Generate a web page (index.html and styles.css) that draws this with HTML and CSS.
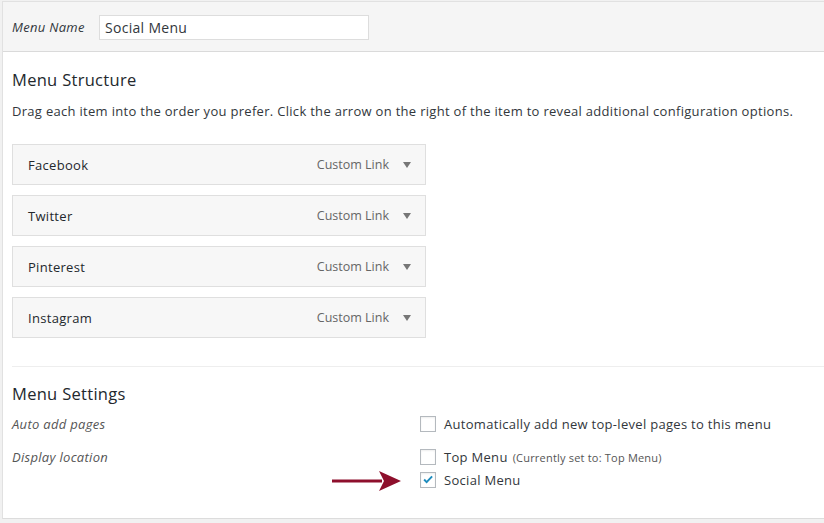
FILE: index.html
```html
<!DOCTYPE html>
<html>
<head>
<meta charset="utf-8">
<link rel="stylesheet" href="styles.css">
</head>
<body>
<div class="frame">
  <div class="header">
    <label class="name-label">Menu Name</label>
    <div class="name-input">Social Menu</div>
  </div>
  <div class="body">
    <h3 class="title">Menu Structure</h3>
    <p class="desc">Drag each item into the order you prefer. Click the arrow on the right of the item to reveal additional configuration options.</p>
    <ul class="items">
      <li class="item"><span class="item-title">Facebook</span><span class="item-type">Custom Link</span><span class="toggle"></span></li>
      <li class="item"><span class="item-title">Twitter</span><span class="item-type">Custom Link</span><span class="toggle"></span></li>
      <li class="item"><span class="item-title">Pinterest</span><span class="item-type">Custom Link</span><span class="toggle"></span></li>
      <li class="item"><span class="item-title">Instagram</span><span class="item-type">Custom Link</span><span class="toggle"></span></li>
    </ul>
    <div class="settings">
      <h3 class="title settings-title">Menu Settings</h3>
      <div class="row">
        <div class="row-label">Auto add pages</div>
        <div class="row-field">
          <div class="opt"><span class="box"></span><span>Automatically add new top-level pages to this menu</span></div>
        </div>
      </div>
      <div class="row row-loc">
        <div class="row-label">Display location</div>
        <div class="row-field">
          <div class="opt"><span class="box"></span><span>Top Menu</span><span class="note">(Currently set to: Top Menu)</span></div>
          <div class="opt opt-social">
            <svg class="pointer" width="70" height="20" viewBox="0 0 70 20"><path d="M0 8.5h50v3H0z" fill="#8e0f2c"/><path d="M47 0L69 10 47 20 52 10z" fill="#8e0f2c"/></svg>
            <span class="box checked"><svg width="16" height="16" viewBox="0 0 16 16"><path d="M2.8 8.3l1.6-1.6 2 2.1L11.9 3l1.6 1.6-7.1 7.4z" fill="#1e8cbe"/></svg></span><span>Social Menu</span>
          </div>
        </div>
      </div>
    </div>
  </div>
</div>
</body>
</html>
```
FILE: styles.css
```css
html, body { margin: 0; padding: 0; }
body {
  background: #f1f1f1;
  font-family: "Open Sans", "Liberation Sans", sans-serif;
  color: #32373c;
  font-size: 13px;
  letter-spacing: 0.3px;
  width: 824px;
  height: 523px;
  overflow: hidden;
}
.frame {
  margin-left: 2px;
  margin-top: 1px;
  background: #fff;
  border-left: 1px solid #e1e1e1;
  border-top: 1px solid #e1e1e1;
  border-bottom: 1px solid #dcdcdc;
  height: 516px;
}
.header {
  background: #f5f5f5;
  border-bottom: 1px solid #dadada;
  height: 49px;
  display: flex;
  align-items: center;
  padding-left: 9px;
}
.name-label {
  font-style: italic;
  color: #32373c;
  font-size: 13px;
  width: 87px;
}
.name-input {
  width: 263px;
  height: 23px;
  margin-top: 1px;
  border: 1px solid #ddd;
  background: #fff;
  font-size: 14px;
  line-height: 23px;
  padding-left: 5px;
  color: #32373c;
}
.body { padding: 0 0 0 9px; }
.title {
  font-size: 16.5px;
  font-weight: 400;
  margin: 0;
  color: #23282d;
}
.body > .title { margin-top: 17px; line-height: 22px; }
.desc {
  margin: 11px 0 0 0;
  font-size: 13px;
  line-height: 18px;
}
.items {
  list-style: none;
  margin: 24px 0 0 0;
  padding: 0;
  width: 414px;
}
.item {
  position: relative;
  height: 39px;
  border: 1px solid #dfdfdf;
  background: #f7f7f7;
  display: flex;
  align-items: center;
  margin-bottom: 10px;
  padding-left: 15px;
}
.item:last-child { margin-bottom: 0; }
.item-title { flex: 1; font-size: 13px; color: #23282d; }
.item-type { color: #666; font-size: 12.5px; margin-right: 14px; letter-spacing: 0; }
.toggle {
  width: 0; height: 0;
  border-left: 4px solid transparent;
  border-right: 4px solid transparent;
  border-top: 6px solid #777;
  margin-right: 14px;
  margin-top: 1px;
}
.settings {
  margin-top: 28px;
  border-top: 1px solid #eee;
  padding-top: 16px;
}
.settings-title { line-height: 22px; }
.row { display: flex; margin-top: 11px; }
.row-loc { margin-top: 17px; }
.row-label {
  width: 408px;
  font-style: italic;
  color: #555;
  font-size: 13px;
  line-height: 16px;
}
.row-field { display: flex; flex-direction: column; }
.opt {
  display: flex;
  align-items: center;
  font-size: 13px;
  color: #32373c;
  height: 16px;
  position: relative;
}
.opt-social { margin-top: 7px; }
.box {
  width: 14px; height: 14px;
  border: 1px solid #b4b9be;
  background: #fff;
  margin-right: 8px;
  display: inline-flex;
  align-items: center;
  justify-content: center;
  box-shadow: inset 0 1px 2px rgba(0,0,0,0.07);
}
.box svg { display: block; }
.note { font-size: 11px; color: #555; margin-left: 5px; letter-spacing: 0.2px; }
.pointer { position: absolute; left: -88px; top: -1px; }
```
